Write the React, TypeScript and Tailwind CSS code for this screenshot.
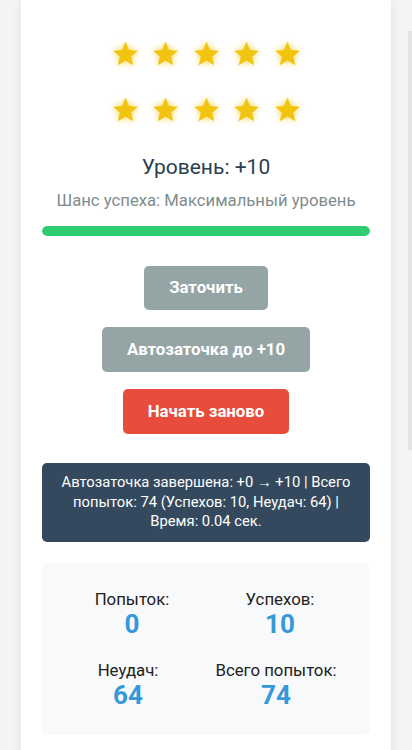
import React from 'react';

const STAR_ROWS = [5, 5];

const STATS: { label: string; value: number }[][] = [
  [
    { label: 'Попыток:', value: 0 },
    { label: 'Успехов:', value: 10 },
  ],
  [
    { label: 'Неудач:', value: 64 },
    { label: 'Всего попыток:', value: 74 },
  ],
];

function Star() {
  return (
    <svg
      viewBox="0 0 24 24"
      className="w-[27px] h-[27px] drop-shadow-[0_0_3px_rgba(241,196,15,0.8)]"
    >
      <path
        d="M12 1.5l3.1 7.4 7.9.6-6 5.2 1.9 7.8L12 18.3l-6.9 4.2L7 14.7 1 9.5l7.9-.6z"
        fill="#f1c40f"
      />
    </svg>
  );
}

function Stat({ label, value }: { label: string; value: number }) {
  return (
    <div className="flex flex-col items-center">
      <span className="text-[16.8px] leading-6 text-[#222]">{label}</span>
      <span className="text-[26px] leading-[26px] font-bold text-[#3498db]">{value}</span>
    </div>
  );
}

export default function App() {
  return (
    <div
      className="min-h-screen bg-[#f4f4f4] px-[21px] overflow-hidden"
      style={{ fontFamily: 'Roboto, "Noto Sans", sans-serif' }}
    >
      <div className="bg-white shadow-[0_0_10px_rgba(0,0,0,0.08)] px-[21px] pt-[40px] pb-6 min-h-[750px]">
        <div className="flex flex-col items-center gap-[29px]">
          {STAR_ROWS.map((n, r) => (
            <div key={r} className="flex gap-[13.5px]">
              {Array.from({ length: n }).map((_, i) => (
                <Star key={i} />
              ))}
            </div>
          ))}
        </div>

        <h2 className="mt-[29px] text-center text-[21px] leading-[30px] text-[#2c3e50]">Уровень: +10</h2>
        <p className="mt-[6px] text-center text-[16.7px] leading-[25px] text-[#7f8c8d]">
          Шанс успеха: Максимальный уровень
        </p>

        <div className="mt-[13px] h-[10px] rounded-full bg-[#ecf0f1] overflow-hidden">
          <div className="h-full rounded-full bg-[#2ecc71]" style={{ width: '100%' }} />
        </div>

        <div className="mt-[30px] flex flex-col items-center gap-[17px]">
          <button className="h-[44px] px-[25px] rounded-[5px] bg-[#95a5a6] text-white font-bold text-[16.8px]">
            Заточить
          </button>
          <button className="h-[45px] px-[25px] rounded-[5px] bg-[#95a5a6] text-white font-bold text-[16.8px]">
            Автозаточка до +10
          </button>
          <button className="h-[45px] px-[25px] rounded-[5px] bg-[#e74c3c] text-white font-bold text-[16.8px]">
            Начать заново
          </button>
        </div>

        <div className="mt-[29px] rounded-[5px] bg-[#34495e] px-[15px] py-[10px] text-center text-[14.75px] leading-[19.5px] text-white">
          Автозаточка завершена: +0 → +10 | Всего попыток: 74 (Успехов: 10, Неудач: 64) | Время: 0.04 сек.
        </div>

        <div className="mt-[21px] rounded-[5px] bg-[#f8f9fa] px-4 pt-6 pb-[27px] flex flex-col gap-[21px]">
          {STATS.map((row, r) => (
            <div key={r} className={r === 1 ? 'grid grid-cols-2 -ml-1 mr-1' : 'grid grid-cols-2'}>
              {row.map((s) => (
                <Stat key={s.label} label={s.label} value={s.value} />
              ))}
            </div>
          ))}
        </div>
      </div>

      <div className="fixed right-0 top-[31px] w-[4px] h-[419px] bg-[#e3e3e3]" />
    </div>
  );
}
